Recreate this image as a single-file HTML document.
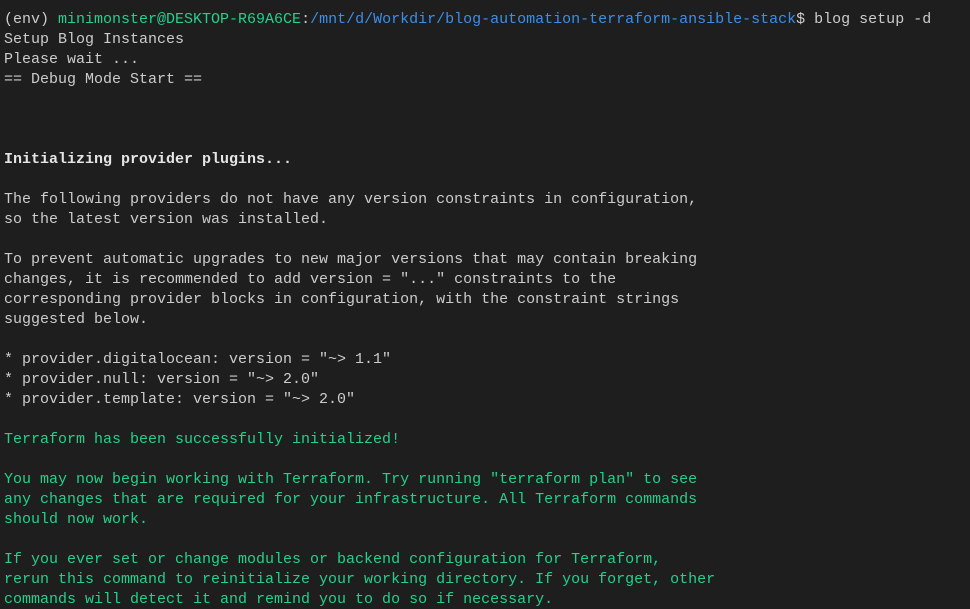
<!DOCTYPE html>
<html><head><style>
html,body{margin:0;padding:0;background:#1e1e1e;width:970px;height:609px;overflow:hidden}
pre{margin:0;padding:10px 0 0 4px;font-family:"Liberation Mono",monospace;font-size:15px;line-height:20px;color:#cccccc;white-space:pre}
.g{color:#23d18b}.b{color:#3b8eea}.w{color:#e5e5e5;font-weight:bold}
</style></head><body><pre>(env) <span class="g">minimonster@DESKTOP-R69A6CE</span>:<span class="b">/mnt/d/Workdir/blog-automation-terraform-ansible-stack</span>$ blog setup -d
Setup Blog Instances
Please wait ...
== Debug Mode Start ==



<span class="w">Initializing provider plugins...</span>

The following providers do not have any version constraints in configuration,
so the latest version was installed.

To prevent automatic upgrades to new major versions that may contain breaking
changes, it is recommended to add version = "..." constraints to the
corresponding provider blocks in configuration, with the constraint strings
suggested below.

* provider.digitalocean: version = "~&gt; 1.1"
* provider.null: version = "~&gt; 2.0"
* provider.template: version = "~&gt; 2.0"

<span class="g">Terraform has been successfully initialized!</span>

<span class="g">You may now begin working with Terraform. Try running "terraform plan" to see
any changes that are required for your infrastructure. All Terraform commands
should now work.</span>

<span class="g">If you ever set or change modules or backend configuration for Terraform,
rerun this command to reinitialize your working directory. If you forget, other
commands will detect it and remind you to do so if necessary.</span>
</pre></body></html>
